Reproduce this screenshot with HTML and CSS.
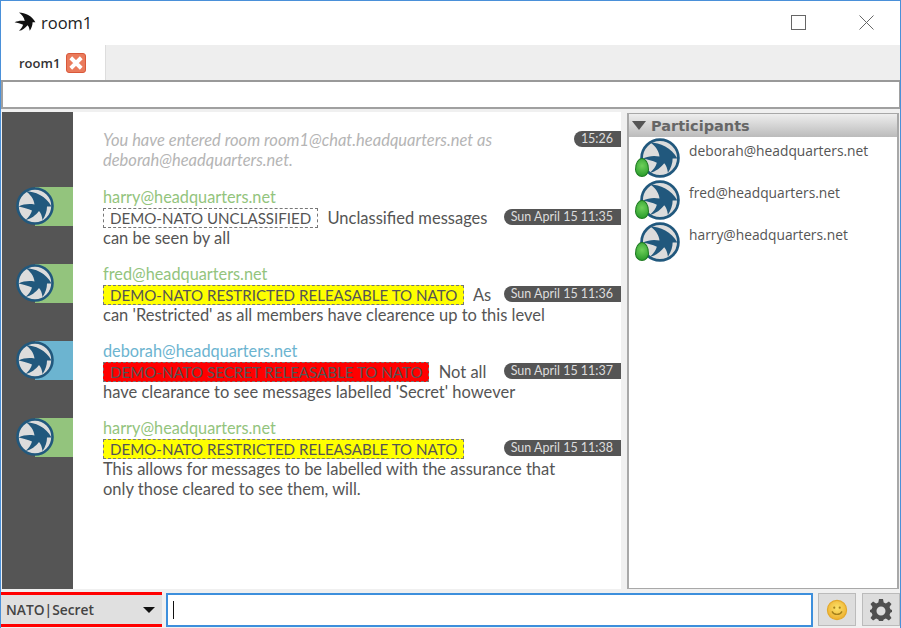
FILE: index.html
```html
<!DOCTYPE html>
<html lang="en">
<head>
    <meta charset="UTF-8">
    <title>room1</title>
    <link rel="stylesheet" href="styles.css">
</head>
<body>
    <svg class="defs" width="0" height="0">
        <defs>
            <radialGradient id="gold" cx="50%" cy="40%" r="60%">
                <stop offset="0" stop-color="#fbe26a"/>
                <stop offset="1" stop-color="#eeb02f"/>
            </radialGradient>
        </defs>
        <symbol id="bird" viewBox="0 0 38 38">
            <path d="M2.5 19.5 C8 17 13 16.5 18.5 17.5 C18 12 14 7 9.5 4 C19 4.5 30 9 35.5 19.5 L31 19.5 C31 24 29.5 28.5 26.5 33 C26 29 25 26 23 24 C20 28 15 32 9.5 33 C13 30 15 27 16 23.5 C12 21.5 7 20.5 2.5 19.5 Z"/>
        </symbol>
        <symbol id="avatar" viewBox="0 0 38 38">
            <circle cx="19" cy="19" r="17.5" fill="#dcdcdc"/>
            <use href="#bird" width="38" height="38" fill="#21587d"/>
            <circle cx="19" cy="19" r="17.5" fill="none" stroke="#21587d" stroke-width="2.6"/>
        </symbol>
    </svg>

    <div class="window">
        <div class="titlebar">
            <svg class="app-icon" fill="#111"><use href="#bird"/></svg>
            <span class="app-title">room1</span>
            <div class="win-btns">
                <svg class="win-btn" viewBox="0 0 15 15"><rect x="0.5" y="0.5" width="14" height="14" fill="none" stroke="#666"/></svg>
                <svg class="win-btn" viewBox="0 0 15 15"><path d="M0.5 0.5 L14.5 14.5 M14.5 0.5 L0.5 14.5" stroke="#666" fill="none"/></svg>
            </div>
        </div>

        <div class="tabbar">
            <div class="tab">
                <span>room1</span>
                <span class="tab-close">
                    <svg viewBox="0 0 12 12"><path d="M2.5 2.5 L9.5 9.5 M9.5 2.5 L2.5 9.5" stroke="#fff" stroke-width="2.6"/></svg>
                </span>
            </div>
        </div>

        <div class="subject"></div>

        <div class="main">
            <div class="log">
                <div class="msg msg-system">
                    <div class="gutter"></div>
                    <div class="msg-body">
                        <span class="time">15:26</span>
                        <em>You have entered room room1@chat.headquarters.net as<br>deborah@headquarters.net.</em>
                    </div>
                </div>
                <div class="msg">
                    <div class="gutter">
                        <div class="band green"><svg class="avatar"><use href="#avatar"/></svg></div>
                    </div>
                    <div class="msg-body">
                        <div class="sender green-text">harry@headquarters.net</div>
                        <span class="time">Sun April 15 11:35</span>
                        <span class="label unclassified">DEMO-NATO UNCLASSIFIED</span>
                        Unclassified messages<br>can be seen by all
                    </div>
                </div>
                <div class="msg">
                    <div class="gutter">
                        <div class="band green"><svg class="avatar"><use href="#avatar"/></svg></div>
                    </div>
                    <div class="msg-body">
                        <div class="sender green-text">fred@headquarters.net</div>
                        <span class="time">Sun April 15 11:36</span>
                        <span class="label restricted">DEMO-NATO RESTRICTED RELEASABLE TO NATO</span>
                        As<br>can 'Restricted' as all members have clearence up to this level
                    </div>
                </div>
                <div class="msg">
                    <div class="gutter">
                        <div class="band blue"><svg class="avatar"><use href="#avatar"/></svg></div>
                    </div>
                    <div class="msg-body">
                        <div class="sender blue-text">deborah@headquarters.net</div>
                        <span class="time">Sun April 15 11:37</span>
                        <span class="label secret">DEMO-NATO SECRET RELEASABLE TO NATO</span>
                        Not all<br>have clearance to see messages labelled 'Secret' however
                    </div>
                </div>
                <div class="msg">
                    <div class="gutter">
                        <div class="band green"><svg class="avatar"><use href="#avatar"/></svg></div>
                    </div>
                    <div class="msg-body">
                        <div class="sender green-text">harry@headquarters.net</div>
                        <span class="time">Sun April 15 11:38</span>
                        <span class="label restricted">DEMO-NATO RESTRICTED RELEASABLE TO NATO</span><br>
                        This allows for messages to be labelled with the assurance that<br>only those cleared to see them, will.
                    </div>
                </div>
                <div class="msg msg-fill">
                    <div class="gutter"></div>
                </div>
            </div>

            <div class="participants">
                <div class="part-head"><span class="part-arrow"></span>Participants</div>
                <div class="part-row">
                    <span class="part-pic"><svg class="part-avatar"><use href="#avatar"/></svg><span class="presence"></span></span>
                    <span class="part-name">deborah@headquarters.net</span>
                </div>
                <div class="part-row">
                    <span class="part-pic"><svg class="part-avatar"><use href="#avatar"/></svg><span class="presence"></span></span>
                    <span class="part-name">fred@headquarters.net</span>
                </div>
                <div class="part-row">
                    <span class="part-pic"><svg class="part-avatar"><use href="#avatar"/></svg><span class="presence"></span></span>
                    <span class="part-name">harry@headquarters.net</span>
                </div>
            </div>
        </div>

        <div class="inputbar">
            <div class="level">
                <span>NATO|Secret</span>
                <span class="level-arrow"></span>
            </div>
            <div class="entry"><span class="caret"></span></div>
            <div class="tool-btn smiley">
                <svg viewBox="0 0 24 24" width="22" height="22">
                    <circle cx="12" cy="12" r="10.5" fill="url(#gold)" stroke="#e3a92c" stroke-width="1.2"/>
                    <circle cx="9" cy="9.5" r="1.2" fill="#a5811c"/>
                    <circle cx="15" cy="9.5" r="1.2" fill="#a5811c"/>
                    <path d="M6.5 13.5 C8.5 18 15.5 18 17.5 13.5" fill="none" stroke="#a5811c" stroke-width="1.4"/>
                </svg>
            </div>
            <div class="tool-btn">
                <svg viewBox="0 0 24 24" width="24" height="24">
                    <path fill="#4f4f4f" fill-rule="evenodd" d="M10 1 H14 L14.7 4.6 L16.9 5.5 L19.9 3.5 L22.5 6.1 L20.5 9.1 L21.4 11.3 L23 12 V14 L21.4 14.7 L20.5 16.9 L22.5 19.9 L19.9 22.5 L16.9 20.5 L14.7 21.4 L14 23 H10 L9.3 21.4 L7.1 20.5 L4.1 22.5 L1.5 19.9 L3.5 16.9 L2.6 14.7 L1 14 V12 L2.6 11.3 L3.5 9.1 L1.5 6.1 L4.1 3.5 L7.1 5.5 L9.3 4.6 Z M12 8.5 A4.5 4.5 0 1 0 12 17.5 A4.5 4.5 0 1 0 12 8.5 Z"/>
                </svg>
            </div>
        </div>
    </div>
</body>
</html>
```

FILE: styles.css
```css
* {
    box-sizing: border-box;
}
html, body {
    margin: 0;
    padding: 0;
    height: 100%;
    overflow: hidden;
}
body {
    font-family: Lato, "Liberation Sans", sans-serif;
    font-size: 16px;
    color: #555;
    background-color: #fff;
}
.defs {
    display: block;
    height: 0;
}
.window {
    width: 901px;
    height: 628px;
    display: flex;
    flex-direction: column;
    border: 1px solid #4a90d9;
    border-bottom: 0;
    background-color: #f0f0f0;
}

/* title bar */
.titlebar {
    height: 44px;
    flex: none;
    display: flex;
    align-items: center;
    padding-left: 12px;
    padding-bottom: 2px;
    background-color: #fff;
}
.app-icon {
    width: 24px;
    height: 24px;
}
.app-title {
    margin-left: 4px;
    font-family: "Open Sans", sans-serif;
    font-size: 16.5px;
    color: #222;
}
.win-btns {
    margin-left: auto;
    display: flex;
    gap: 53px;
    padding-right: 26px;
}
.win-btn {
    width: 15px;
    height: 15px;
}

/* tabs */
.tabbar {
    height: 37px;
    flex: none;
    background-color: #eee;
    border-bottom: 2px solid #999;
}
.tab {
    width: 105px;
    height: 35px;
    display: flex;
    align-items: center;
    gap: 6px;
    padding-left: 18px;
    padding-top: 1px;
    background-color: #fff;
    border-right: 1px solid #ddd;
    font-family: "Open Sans", sans-serif;
    font-size: 13px;
    font-weight: 600;
    color: #333;
}
.tab-close {
    width: 20px;
    height: 20px;
    display: flex;
    border-radius: 3px;
    border: 1px solid #d9583a;
    background-color: #ea7b5c;
}
.tab-close svg {
    width: 18px;
    height: 18px;
}
.subject {
    height: 27px;
    flex: none;
    background-color: #fff;
    border: 2px solid #a0a0a0;
    border-top: 0;
    border-right-width: 1px;
}

/* chat */
.main {
    flex: 1;
    min-height: 0;
    display: flex;
    gap: 6px;
    padding: 3px 1px 3px 1px;
}
.log {
    width: 619px;
    flex: none;
    display: flex;
    flex-direction: column;
    background-color: #fff;
}
.msg {
    display: flex;
    flex: none;
}
.msg-fill {
    flex: 1;
}
.gutter {
    width: 71px;
    flex: none;
    background-color: #555;
}
.band {
    height: 39px;
    margin-left: 33px;
    position: relative;
}
.band.green {
    background-color: #93c47d;
}
.band.blue {
    background-color: #6cb4d0;
}
.avatar {
    position: absolute;
    left: -19px;
    top: 0;
    width: 38px;
    height: 38px;
}
.msg-body {
    flex: 1;
    margin-left: 30px;
    padding-bottom: 16px;
    line-height: 20px;
    font-size: 16.5px;
}
.msg-system {
    color: #b5b5b5;
}
.msg-system .msg-body {
    padding-top: 18px;
    padding-bottom: 17px;
}
.sender {
    height: 21px;
    font-size: 16.3px;
}
.green-text {
    color: #93c47d;
}
.blue-text {
    color: #6cb4d0;
}
.time {
    float: right;
    height: 16px;
    margin-top: 1px;
    padding: 0 8px 0 7px;
    line-height: 16px;
    border-radius: 8px 0 0 8px;
    background-color: #555;
    color: #ddd;
    font-size: 12.5px;
}
.label {
    padding: 0 6px;
    margin-right: 5px;
    border: 1px dashed #777;
    font-size: 15.1px;
}
.restricted {
    background-color: #ff0;
}
.secret {
    background-color: #f00;
}

/* participants */
.participants {
    flex: 1;
    min-width: 0;
    margin-top: 1px;
    background-color: #fff;
    border: 2px solid #a8a8a8;
    border-top-width: 1px;
    border-bottom-width: 1px;
}
.part-head {
    height: 23px;
    display: flex;
    align-items: center;
    gap: 5px;
    padding-left: 3px;
    background: linear-gradient(#eee, #bbb);
    font-family: "DejaVu Sans", sans-serif;
    font-size: 14.5px;
    font-weight: 700;
    color: #666;
}
.part-arrow {
    width: 0;
    height: 0;
    border-left: 7px solid transparent;
    border-right: 7px solid transparent;
    border-top: 9px solid #555;
}
.part-row {
    height: 42px;
    display: flex;
    padding-left: 5px;
    font-family: "Open Sans", sans-serif;
    font-size: 13.8px;
    color: #555;
}
.part-name {
    margin-left: 9px;
    line-height: 28px;
}
.part-pic {
    position: relative;
    width: 46px;
    height: 42px;
    flex: none;
}
.part-avatar {
    position: absolute;
    left: 6px;
    top: 1px;
    width: 40px;
    height: 40px;
}
.presence {
    position: absolute;
    left: 1px;
    top: 21px;
    width: 14px;
    height: 19px;
    border-radius: 50% 50% 50% 50% / 60% 60% 40% 40%;
    background: radial-gradient(circle at 50% 40%, #6fd05a, #1f9424);
    border: 1px solid #1c7a20;
}

/* input row */
.inputbar {
    height: 36px;
    flex: none;
    display: flex;
    padding: 0 0 1px 0;
    align-items: stretch;
}
.level {
    width: 161px;
    flex: none;
    display: flex;
    align-items: center;
    justify-content: space-between;
    padding: 0 7px 0 5px;
    background-color: #e0e0e0;
    border-top: 3px solid #f00;
    border-bottom: 3px solid #f00;
    font-family: "Open Sans", sans-serif;
    font-size: 13.8px;
    font-weight: 600;
    color: #444;
}
.level-arrow {
    border-left: 6px solid transparent;
    border-right: 6px solid transparent;
    border-top: 6px solid #111;
}
.entry {
    flex: 1;
    display: flex;
    align-items: center;
    margin: 1px 5px 0 4px;
    padding-left: 5px;
    background-color: #fff;
    border: 2px solid #3d8fdc;
}
.caret {
    width: 1px;
    height: 18px;
    background-color: #111;
}
.tool-btn {
    width: 38px;
    flex: none;
    margin: 1px 0 1px 0;
    display: flex;
    align-items: center;
    justify-content: center;
    background-color: #ddd;
    border: 1px solid #bbb;
}
.smiley {
    margin-right: 6px;
}
```
